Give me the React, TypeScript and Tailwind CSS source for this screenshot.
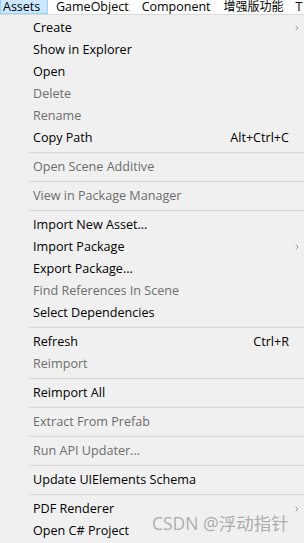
import { ChevronRight } from "lucide-react";

type Item =
  | { sep: true }
  | { label: string; disabled?: boolean; shortcut?: string; sub?: boolean; sep?: false };

const items: Item[] = [
  { label: "Create", sub: true },
  { label: "Show in Explorer" },
  { label: "Open" },
  { label: "Delete", disabled: true },
  { label: "Rename", disabled: true },
  { label: "Copy Path", shortcut: "Alt+Ctrl+C" },
  { sep: true },
  { label: "Open Scene Additive", disabled: true },
  { sep: true },
  { label: "View in Package Manager", disabled: true },
  { sep: true },
  { label: "Import New Asset..." },
  { label: "Import Package", sub: true },
  { label: "Export Package..." },
  { label: "Find References In Scene", disabled: true },
  { label: "Select Dependencies" },
  { sep: true },
  { label: "Refresh", shortcut: "Ctrl+R" },
  { label: "Reimport", disabled: true },
  { sep: true },
  { label: "Reimport All" },
  { sep: true },
  { label: "Extract From Prefab", disabled: true },
  { sep: true },
  { label: "Run API Updater...", disabled: true },
  { sep: true },
  { label: "Update UIElements Schema" },
  { sep: true },
  { label: "PDF Renderer", sub: true },
  { label: "Open C# Project" },
];

const font = { fontFamily: '"Open Sans", "Noto Sans CJK SC", sans-serif' };

const App = () => {
  return (
    <div className="w-[304px] h-[543px] overflow-hidden bg-[#f0f0f0] relative" style={font}>
      {/* menu bar */}
      <div className="h-[15px] bg-white flex items-center text-[12.5px] leading-[14px] text-black border-b border-[#dadada] whitespace-nowrap">
        <div className="h-[14px] w-[48px] shrink-0 bg-[#cce8ff] border border-[#99d1ff] border-t-0 flex items-center pl-[2px]">
          Assets
        </div>
        <span className="ml-[8px] shrink-0">GameObject</span>
        <span className="ml-[13px] shrink-0">Component</span>
        <span className="ml-[13px] shrink-0 text-[12px]">增强版功能</span>
        <span className="ml-[12px] shrink-0">T</span>
      </div>

      {/* menu */}
      <div className="flex flex-col pt-[2px] text-[12.6px]">
        {items.map((it, i) =>
          it.sep ? (
            <div key={i} className="h-[7px] flex items-center pl-[29px]">
              <div className="h-px w-full bg-[#d7d7d7]" />
            </div>
          ) : (
            <div
              key={i}
              className={`h-[22px] flex items-center pl-[33px] pr-[15px] ${
                it.disabled ? "text-[#6d6d6d]" : "text-black"
              }`}
            >
              <span className="flex-1 whitespace-nowrap">{it.label}</span>
              {it.shortcut && <span>{it.shortcut}</span>}
              {it.sub && (
                <ChevronRight className="w-[8px] h-[8px] -mr-[12px] text-[#333]" strokeWidth={1.4} />
              )}
            </div>
          )
        )}
      </div>

      {/* watermark */}
      <div className="absolute left-[152px] top-[515px] text-[17.5px] text-[#9a9a9a]/80 leading-none whitespace-nowrap">
        CSDN @浮动指针
      </div>
    </div>
  );
};

export default App;
